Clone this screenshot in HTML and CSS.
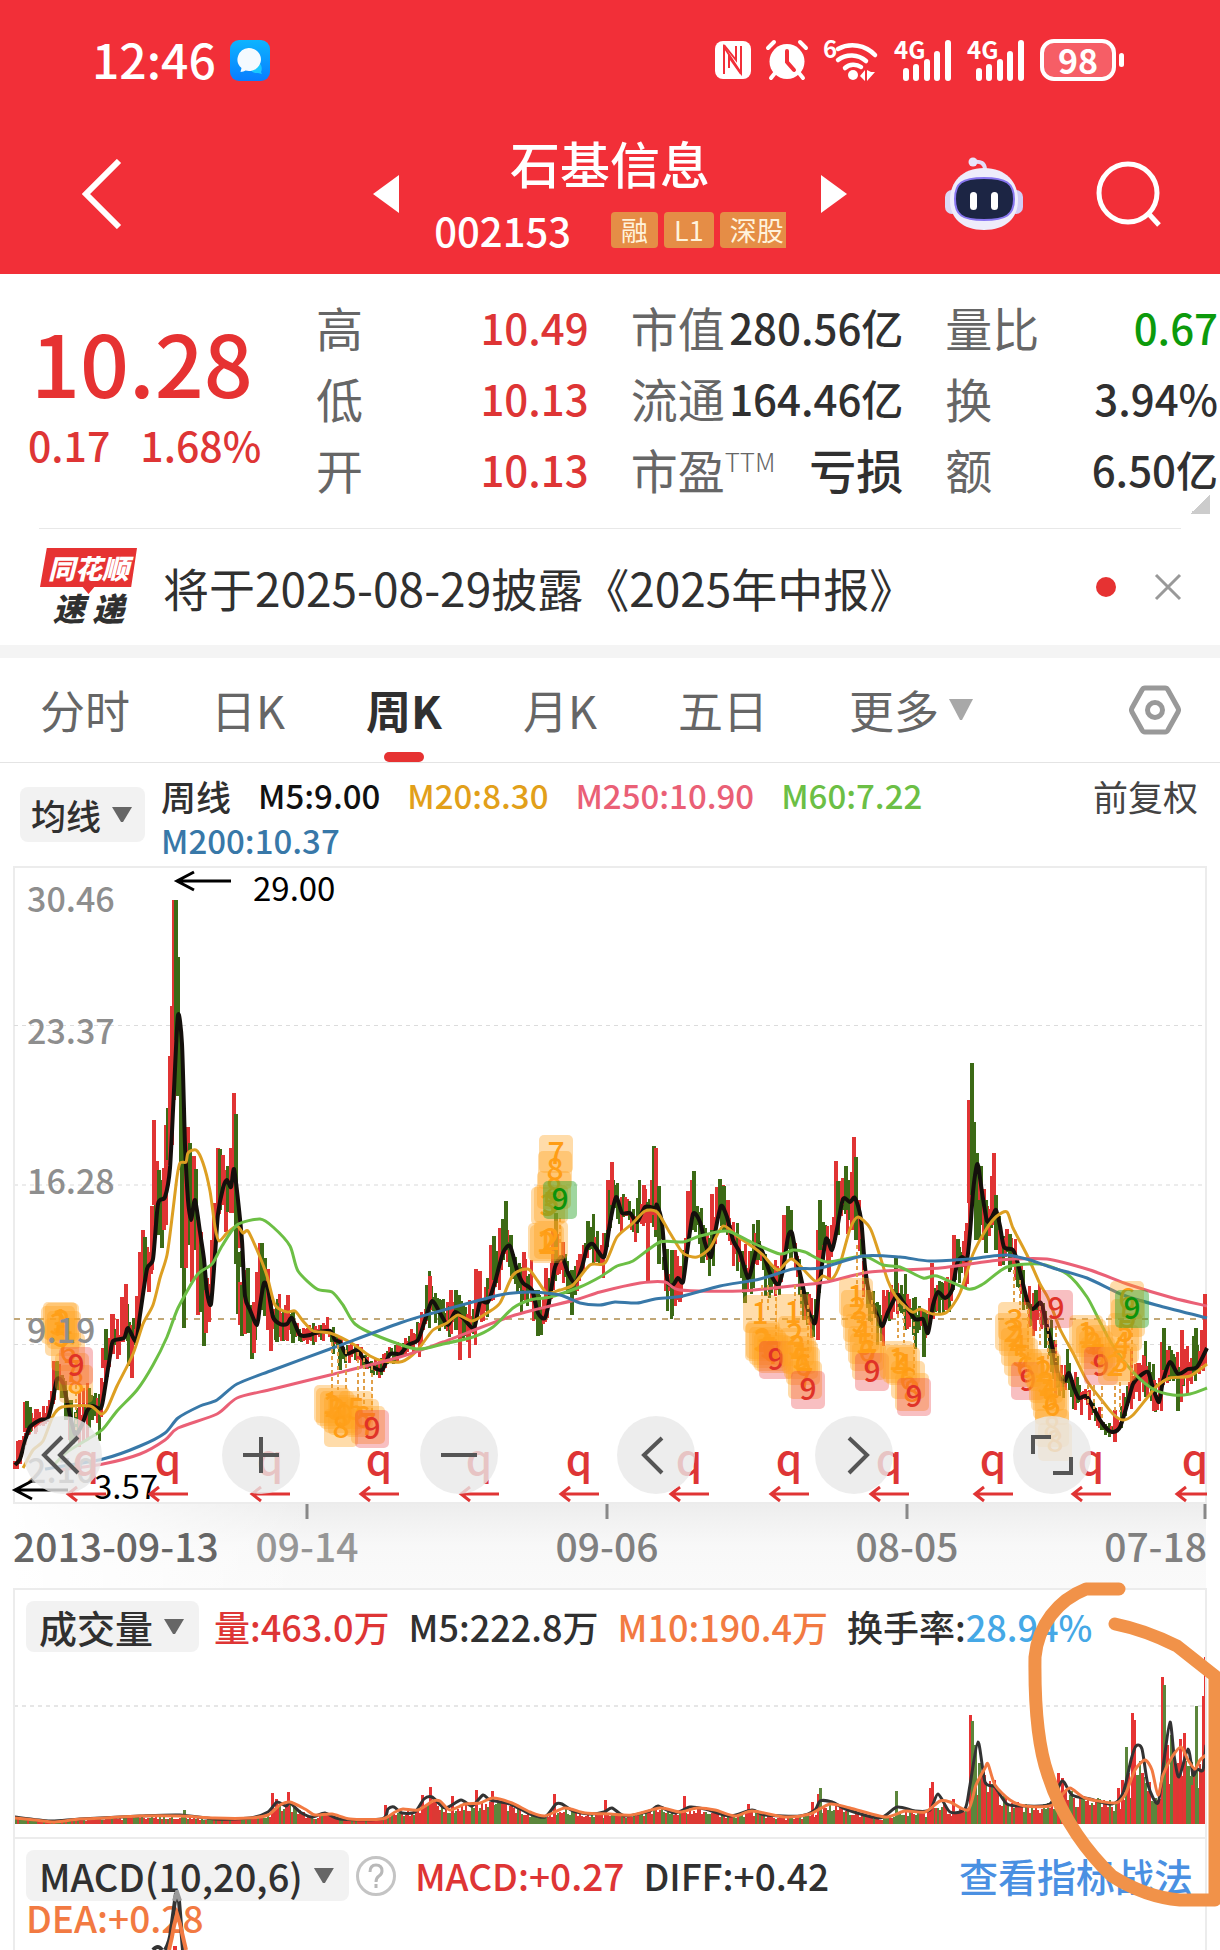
FILE: index.html
```html
<!DOCTYPE html>
<html lang="zh-CN">
<head>
<meta charset="utf-8">
<meta name="viewport" content="width=device-width, initial-scale=1">
<title>石基信息 002153</title>
<link rel="stylesheet" href="styles.css">
</head>
<body>
<header class="top">
  <div class="status">
    <div class="status-side">
      <span class="clock">12:46</span>
      <svg class="icon" width="40" height="41" viewBox="0 0 40 41">
        <defs><linearGradient id="chatBg" x1="0" y1="0" x2="0" y2="1"><stop offset="0" stop-color="#0db4ff"/><stop offset="1" stop-color="#087dff"/></linearGradient></defs>
        <rect width="40" height="41" rx="9" fill="url(#chatBg)"/>
        <path d="M26 21a8 8 0 0 1 5 11l1 2-4-1a8 8 0 0 1-8-4z" fill="#19c8ff"/>
        <path d="M18.500 8a12 11.500 0 1 1-3 22.500c-1 .5-3 1.500-5 1.500l1-4A12 11.500 0 0 1 18.500 8z" fill="#f4faff"/>
      </svg>
    </div>
    <div class="status-side status-right">
      <svg class="icon" width="36" height="38" viewBox="0 0 36 38">
        <rect width="36" height="38" rx="8" fill="#fff"/>
        <path d="M9 33V6l17 26V5" fill="none" stroke="#f22f38" stroke-width="2"/>
        <path d="M14 27V16l12 17M9 4l12 15V5" fill="none" stroke="#f22f38" stroke-width="2"/>
      </svg>
      <svg class="icon" width="42" height="40" viewBox="0 0 42 40">
        <circle cx="21" cy="21.500" r="17.500" fill="#fff"/>
        <path d="M2 8l6-6M40 8l-6-6M9 33l-4 5M33 33l4 5" stroke="#fff" stroke-width="4" stroke-linecap="round"/>
        <path d="M21 11v11l7 8" fill="none" stroke="#f22f38" stroke-width="4" stroke-linecap="round"/>
      </svg>
      <svg class="icon" width="56" height="42" viewBox="0 0 56 42">
        <text x="0" y="19" class="net-label">6</text>
        <path d="M15 10a31 31 0 0 1 37 6M15 21a22 22 0 0 1 28 1M22 29a13 13 0 0 1 16-1" fill="none" stroke="#fff" stroke-width="4.500" stroke-linecap="round"/>
        <circle cx="30" cy="36" r="5" fill="#fff"/>
        <path d="M37 37l5-6v11zM44 31v11l8-9h-4z" fill="#fff"/>
      </svg>
      <svg class="icon" width="58" height="42" viewBox="0 0 58 42">
        <text x="0" y="20" class="net-label">4G</text>
        <path d="M12 39v-7M22 39V28M33 39V23M43 39V15M54 39V4" stroke="#fff" stroke-width="6" stroke-linecap="round"/>
      </svg>
      <svg class="icon" width="58" height="42" viewBox="0 0 58 42">
        <text x="0" y="20" class="net-label">4G</text>
        <path d="M12 39v-7M22 39V28M33 39V23M43 39V15M54 39V4" stroke="#fff" stroke-width="6" stroke-linecap="round"/>
      </svg>
      <span class="battery">98</span>
    </div>
  </div>
  <div class="titlebar">
    <button class="plain back" aria-label="返回">
      <svg width="40" height="70" viewBox="0 0 40 70"><path d="M37 2L4 35l33 33" fill="none" stroke="#fff" stroke-width="6"/></svg>
    </button>
    <div class="switcher">
      <button class="plain" aria-label="上一只"><svg width="26" height="38" viewBox="0 0 26 38"><path d="M26 0v38L0 19z" fill="#fff"/></svg></button>
      <div class="stock">
        <h1>石基信息</h1>
        <p class="code-line"><span>002153</span><span class="tags"><span class="tag">融</span><span class="tag">L1</span><span class="tag tag-cut">深股</span></span></p>
      </div>
      <button class="plain" aria-label="下一只"><svg width="26" height="38" viewBox="0 0 26 38"><path d="M0 0v38l26-19z" fill="#fff"/></svg></button>
    </div>
    <div class="actions">
      <button class="plain" aria-label="智能助手">
        <svg width="78" height="74" viewBox="0 0 78 74">
          <path d="M28 5q12-2 12 8" fill="none" stroke="#e4dcf8" stroke-width="4"/>
          <circle cx="28" cy="5" r="4.500" fill="#e9e4fa"/>
          <rect x="0" y="33" width="14" height="24" rx="7" fill="#dcd8f5"/><rect x="64" y="33" width="14" height="24" rx="7" fill="#d2ccf5"/>
          <path d="M39 11c22 0 34 14 34 32S61 73 39 73 5 61 5 43s12-32 34-32z" fill="#eeecfb"/>
          <path d="M39 21c22 0 30 5 30 21s-8 21-30 21S10 58 10 42s7-21 29-21z" fill="#1c2544" stroke="#8876f0" stroke-width="2"/>
          <rect x="25" y="35" width="7" height="18" rx="3.500" fill="#fff"/><rect x="46" y="35" width="7" height="18" rx="3.500" fill="#fff"/>
        </svg>
      </button>
      <button class="plain" aria-label="搜索">
        <svg width="66" height="66" viewBox="0 0 66 66"><circle cx="32" cy="32" r="29" fill="none" stroke="#fff" stroke-width="5"/><path d="M52 52l11 12" stroke="#fff" stroke-width="5"/></svg>
      </button>
    </div>
  </div>
</header>

<main>
  <section class="quote">
    <div class="price-box">
      <div class="price">10.28</div>
      <div class="change"><span>0.17</span><span>1.68%</span></div>
    </div>
    <dl class="stats">
      <div><dt>高</dt><dd class="up">10.49</dd></div>
      <div><dt>低</dt><dd class="up">10.13</dd></div>
      <div><dt>开</dt><dd class="up">10.13</dd></div>
    </dl>
    <dl class="stats">
      <div><dt>市值</dt><dd>280.56亿</dd></div>
      <div><dt>流通</dt><dd>164.46亿</dd></div>
      <div><dt>市盈<sup>TTM</sup></dt><dd class="word">亏损</dd></div>
    </dl>
    <dl class="stats">
      <div><dt>量比</dt><dd class="down">0.67</dd></div>
      <div><dt>换</dt><dd>3.94%</dd></div>
      <div><dt>额</dt><dd>6.50亿</dd></div>
    </dl>
    <span class="corner"></span>
  </section>

  <section class="news">
    <div class="brand"><b class="brand-top">同花顺</b><b class="brand-bottom">速 递</b></div>
    <a class="headline" href="#report">将于2025-08-29披露《2025年中报》</a>
    <span class="dot"></span>
    <button class="plain" aria-label="关闭"><svg width="28" height="28" viewBox="0 0 28 28"><path d="M2 2l24 24M26 2L2 26" stroke="#999" stroke-width="3"/></svg></button>
  </section>

  <nav class="tabs">
    <button class="plain tab">分时</button>
    <button class="plain tab">日K</button>
    <button class="plain tab active">周K</button>
    <button class="plain tab">月K</button>
    <button class="plain tab">五日</button>
    <button class="plain tab more">更多<svg width="24" height="22" viewBox="0 0 24 22"><path d="M0 0h24L13 21h-2z" fill="#a8a8a8"/></svg></button>
    <button class="plain gear" aria-label="设置">
      <svg width="52" height="50" viewBox="0 0 52 50"><path d="M16 3h20q2 0 3 2l10 18q1 2 0 4L39 45q-1 2-3 2H16q-2 0-3-2L3 27q-1-2 0-4L13 5q1-2 3-2z" fill="none" stroke="#999" stroke-width="5"/><circle cx="26" cy="25" r="7.500" fill="none" stroke="#999" stroke-width="5"/></svg>
    </button>
  </nav>

  <section class="ma">
    <button class="picker">均线<span class="caret"></span></button>
    <ul class="legend">
      <li class="c-dark period">周线</li><li class="c-black">M5:9.00</li><li class="c-gold">M20:8.30</li><li class="c-pink">M250:10.90</li><li class="c-lime">M60:7.22</li><li class="c-blue">M200:10.37</li>
    </ul>
    <span class="adjust">前复权</span>
  </section>

  <section class="chart">
    <svg class="plot" viewBox="0 864 1220 724">
      <defs>
        <linearGradient id="stripY" x1="0" y1="0" x2="0" y2="1"><stop offset="0" stop-color="#ededed"/><stop offset=".5" stop-color="#f8f8f8"/><stop offset="1" stop-color="#fafafa"/></linearGradient>
        <linearGradient id="stripX"><stop offset="0" stop-color="#fff"/><stop offset="1" stop-color="#fff" stop-opacity="0"/></linearGradient>
      </defs>
      <rect x="13" y="1503" width="1193" height="85" fill="url(#stripY)"/>
      <rect x="13" y="1503" width="300" height="85" fill="url(#stripX)"/>
      <rect x="14" y="867" width="1192" height="636" fill="none" stroke="#ececec" stroke-width="2"/>
      <path d="M14 1025.500H1206M14 1344.500H1206" stroke="#dcdcdc" stroke-dasharray="4 4"/>
      <path d="M14 1185H1206" stroke="#ececec" stroke-width="2" stroke-dasharray="4 4"/>
      <path d="M14 1319H1206" stroke="#c2a878" stroke-width="2" stroke-dasharray="6 6"/>
      <g id="candles"></g>
      <g id="averages"></g>
      <g id="markers"></g>
      <g class="axis">
        <text x="27" y="912">30.46</text><text x="27" y="1044">23.37</text><text x="27" y="1194">16.28</text><text x="27" y="1343">9.19</text><text x="27" y="1483">2.10</text>
      </g>
      <g class="extreme">
        <text x="253" y="901">29.00</text><text x="94" y="1499">3.57</text>
        <path d="M231 881H178M194 872L177 881l17 9M68 1490H16M32 1481l-17 9 17 9"/>
      </g>
      <g id="signals"></g>
      <path d="M307 1504v15M607 1504v15M907 1504v15M1205 1504v15" stroke="#888" stroke-width="3"/>
      <g class="dates">
        <text x="13" y="1562" class="date-first">2013-09-13</text>
        <text x="307" y="1562" text-anchor="middle" class="date-faded">09-14</text>
        <text x="607" y="1562" text-anchor="middle">09-06</text>
        <text x="907" y="1562" text-anchor="middle">08-05</text>
        <text x="1207" y="1562" text-anchor="end">07-18</text>
      </g>
    </svg>
    <div class="controls">
      <button class="round" aria-label="快退"><svg viewBox="0 0 78 78"><path d="M38 21L20 39l18 18M54 21L36 39l18 18"/></svg></button>
      <button class="round" aria-label="放大"><svg viewBox="0 0 78 78"><path d="M39 21v36M21 39h36"/></svg></button>
      <button class="round" aria-label="缩小"><svg viewBox="0 0 78 78"><path d="M21 39h36"/></svg></button>
      <button class="round" aria-label="左移"><svg viewBox="0 0 78 78"><path d="M45 22L27 39l18 18"/></svg></button>
      <button class="round" aria-label="右移"><svg viewBox="0 0 78 78"><path d="M34 22l18 17-18 18"/></svg></button>
      <button class="round" aria-label="全屏"><svg viewBox="0 0 78 78"><path d="M20 38V21h18M58 41v16H40"/></svg></button>
    </div>
  </section>

  <section class="volume">
    <div class="panel">
      <div class="row">
        <button class="picker picker-wide">成交量<span class="caret"></span></button>
        <span class="up">量:463.0万</span><span class="c-dark">M5:222.8万</span><span class="c-orange">M10:190.4万</span><span class="c-dark">换手率:<span class="c-sky">28.94%</span></span>
      </div>
      <svg class="plot" viewBox="15 1652 1190 185">
        <path d="M14 1706H1206" stroke="#e6e6e6" stroke-width="2" stroke-dasharray="4 4"/>
        <g id="volume"></g>
      </svg>
    </div>
    <svg class="ink" width="200" height="350" viewBox="1020 1570 200 350">
      <path d="M1119 1589H1086C1058 1600 1038 1625 1035 1657Q1034 1735 1048 1775C1062 1820 1090 1855 1112 1876Q1145 1897 1180 1900H1215V1676L1177 1646Q1145 1630 1115 1624"/>
    </svg>
  </section>

  <section class="macd">
    <div class="panel">
      <div class="row row-macd">
        <button class="picker picker-wide">MACD(10,20,6)<span class="caret"></span></button>
        <svg class="help" width="40" height="40" viewBox="0 0 40 40"><circle cx="20" cy="20" r="18.500" fill="none" stroke="#c4c4c4" stroke-width="3"/><path d="M14 16q0-7 6-7t6 6q0 3-3 5t-3 6M20 28v4" fill="none" stroke="#b8b8b8" stroke-width="3"/></svg>
        <span class="up">MACD:+0.27</span><span class="c-dark">DIFF:+0.42</span>
        <a class="guide" href="#guide">查看指标战法</a>
      </div>
      <div class="dea">DEA:+0.28</div>
      <svg class="peak" width="60" height="60" viewBox="140 1890 60 60">
        <path d="M153 1950q5-6 9 0M165 1950q5-8 6-20l5-37 3 8 4 49" fill="none" stroke="#333" stroke-width="4"/>
        <path d="M174 1901l3-9 3 9" fill="none" stroke="#999" stroke-width="4"/>
        <path d="M169 1950q3-12 5-24l3-12 3 10 6 26" fill="none" stroke="#f27a42" stroke-width="4"/>
        <path d="M175 1946v4" stroke="#e63232" stroke-width="4"/>
      </svg>
    </div>
  </section>
</main>
<script src="script.js"></script>
</body>
</html>
```
FILE: styles.css
```css
* { box-sizing: border-box; }
body {
  margin: 0;
  background: #fff;
  color: #303030;
  font-family: "Noto Sans CJK SC", sans-serif;
  font-weight: 500;
  min-height: 100vh;
  display: flex;
  flex-direction: column;
  overflow-x: hidden;
}
main { flex: 1; display: flex; flex-direction: column; }
h1, p, dl, dd, ul { margin: 0; padding: 0; }
button { font: inherit; color: inherit; cursor: pointer; }
a { text-decoration: none; }
svg { display: block; }
.plain { border: 0; background: none; padding: 0; }

.up { color: #de3535; }
.down { color: #0c9a0c; }
.c-dark { color: #303030; }
.c-black { color: #111; }
.c-gold { color: #e2a01a; }
.c-pink { color: #ea6076; }
.c-lime { color: #6cbf45; }
.c-blue { color: #3878a8; }
.c-orange { color: #f27a42; }
.c-sky { color: #45a8e6; }

.top { background: #f22f38; color: #fff; }
.status { height: 120px; padding: 0 104px 0 92px; display: flex; justify-content: space-between; align-items: center; }
.status-side { display: flex; align-items: center; gap: 14px; }
.status-right { gap: 15px; }
.clock { font-size: 48px; line-height: 60px; padding-bottom: 4px; }
.icon { overflow: visible; }
.net-label { font-size: 24px; font-weight: 700; fill: #fff; }
.battery {
  position: relative;
  width: 76px; height: 42px;
  border: 4px solid #fff; border-radius: 14px;
  background: #f65e66;
  font-size: 34px; line-height: 34px; font-weight: 700; text-align: center;
}
.battery::after { content: ""; position: absolute; right: -12px; top: 10px; width: 5px; height: 14px; border-radius: 3px; background: #fff; }

.titlebar { display: grid; grid-template-columns: 1fr auto 1fr; align-items: center; padding: 0 58px 6px; height: 154px; }
.back { justify-self: start; margin-left: 24px; }
.switcher { display: flex; align-items: center; gap: 35px; }
.stock { padding-top: 6px; text-align: center; }
.stock h1 { font-size: 50px; line-height: 66px; font-weight: 500; }
.code-line { display: flex; align-items: center; justify-content: center; gap: 40px; font-size: 40px; line-height: 70px; }
.tags { display: flex; gap: 6px; }
.tag { background: #e58d46; color: #fff3dc; font-size: 27px; line-height: 36px; height: 36px; padding: 0 10px; border-radius: 4px; font-weight: 400; }
.tag-cut { padding-right: 2px; border-radius: 4px 0 0 4px; }
.actions { display: flex; align-items: center; justify-content: flex-end; gap: 73px; }

.quote { position: relative; display: flex; gap: 42px; padding: 17px 2px 25px 28px; }
.quote::after { content: ""; position: absolute; left: 39px; right: 39px; bottom: 0; border-bottom: 1px solid #e8e8e8; }
.price-box { width: 246px; color: #e63232; padding-top: 25px; white-space: nowrap; }
.price { font-size: 86px; line-height: 90px; padding-left: 3px; }
.change { display: flex; gap: 30px; font-size: 41px; line-height: 76px; color: #de3535; }
.stats { flex: 1; white-space: nowrap; }
.stats div { display: flex; justify-content: space-between; line-height: 71px; height: 71px; }
.stats dt { font-size: 47px; color: #666; font-weight: 400; }
.stats dd { font-size: 42px; }
.stats dd.word { font-size: 47px; }
.stats sup { font-size: 26px; line-height: 26px; font-weight: 300; }
.corner { position: absolute; right: 10px; bottom: 15px; width: 20px; height: 20px; background: linear-gradient(135deg, transparent 50%, #ccc 50%); }

.news { display: flex; align-items: center; height: 129px; padding: 0 38px 0 40px; border-bottom: 13px solid #f4f4f4; }
.brand { width: 97px; text-align: center; font-style: italic; font-weight: 900; }
.brand-top { display: block; height: 46px; background: #e63232; color: #fff; font-size: 27px; line-height: 39px; clip-path: polygon(7% 0, 100% 0, 94% 85%, 56% 85%, 50% 100%, 44% 85%, 0 85%); }
.brand-bottom { display: block; margin-top: -6px; font-size: 32px; line-height: 38px; }
.headline { flex: 1; margin-left: 26px; color: #303030; font-size: 46px; line-height: 60px; font-weight: 400; white-space: nowrap; }
.dot { width: 20px; height: 20px; border-radius: 50%; background: #e63232; margin-right: 38px; }

.tabs { display: flex; align-items: center; gap: 81px; height: 105px; padding: 0 39px 0 40px; border-bottom: 1px solid #e4e4e4; }
.tab { position: relative; height: 104px; font-size: 45px; line-height: 104px; font-weight: 400; color: #666; white-space: nowrap; }
.tab.active { font-weight: 700; color: #303030; }
.tab.active::after { content: ""; position: absolute; left: 50%; bottom: 0; width: 40px; height: 10px; margin-left: -20px; border-radius: 5px; background: #e63232; }
.more { display: flex; align-items: center; gap: 10px; }
.gear { margin-left: auto; }

.ma { display: flex; align-items: flex-start; padding: 10px 22px 0 20px; height: 101px; }
.picker { display: flex; align-items: center; gap: 11px; height: 55px; margin: 0; padding: 0 13px 0 11px; border: 0; border-radius: 8px; background: #f2f2f2; font-size: 35px; color: #303030; white-space: nowrap; }
.caret { width: 20px; height: 15px; background: #666; clip-path: polygon(0 0, 100% 0, 55% 100%, 45% 100%); }
.ma .picker { margin-top: 14px; }
.legend { flex: 1; display: flex; flex-wrap: wrap; column-gap: 27px; margin-left: 16px; list-style: none; font-size: 33px; line-height: 45px; }
.period { font-size: 35px; }
.adjust { font-size: 35px; line-height: 45px; color: #444; font-weight: 400; }

.chart { position: relative; }
.plot { width: 100%; height: auto; }
.plot text { font-family: "Noto Sans CJK SC", sans-serif; }
.axis { font-size: 34px; fill: #8e8e8e; }
.extreme { font-size: 33px; fill: #000; font-weight: 400; }
.extreme path { fill: none; stroke: #000; stroke-width: 3; }
.dates { font-size: 39px; fill: #808080; }
.date-first { fill: #666; }
.date-faded { fill: #969696; }
.marker { font-size: 30px; text-anchor: middle; }
.signal { font-size: 42px; text-anchor: middle; fill: #de3535; }
.controls { position: absolute; left: 24px; right: 129px; bottom: 94px; display: flex; justify-content: space-between; }
.round { width: 78px; height: 78px; padding: 0; border: 0; border-radius: 50%; background: rgba(232, 232, 232, .8); }
.round path { fill: none; stroke: #555; stroke-width: 4; }

.volume { position: relative; z-index: 1; }
.panel { position: relative; margin: 0 13px; border: 2px solid #ececec; border-bottom: 0; }
.row { display: flex; align-items: center; gap: 19px; padding: 11px 0 0 11px; font-size: 36px; line-height: 51px; white-space: nowrap; }
.picker-wide { height: 51px; padding: 0 15px 0 13px; font-size: 38px; margin-right: -4px; }
.ink { position: absolute; right: 0; top: -18px; pointer-events: none; }
.ink path { fill: none; stroke: #f19249; stroke-width: 13; stroke-linecap: round; stroke-linejoin: round; }

.macd { flex: 1; display: flex; }
.macd .panel { flex: 1; min-height: 112px; overflow: hidden; }
.row-macd { font-size: 37px; padding-right: 12px; }
.row-macd .picker { margin-right: -12px; }
.guide { margin-left: auto; color: #4a90e2; font-size: 39px; }
.dea { padding-left: 11px; color: #f27a42; font-size: 37px; line-height: 32px; }
.peak { position: absolute; left: 125px; top: 51px; }
```
FILE: script.js
```js
const NS = "http://www.w3.org/2000/svg";
const RED = "#e03434";
const GREEN = "#3c6a16";

function add(parent, name, attrs, text) {
  const el = document.createElementNS(NS, name);
  for (const key in attrs) el.setAttribute(key, attrs[key]);
  if (text !== undefined) el.textContent = text;
  parent.appendChild(el);
  return el;
}

function points(str) {
  return str.trim().split(/\s+/).map(p => p.split(",").map(Number));
}

function valueAt(list, x) {
  if (x <= list[0][0]) return list[0][1];
  for (let i = 1; i < list.length; i++) {
    if (x <= list[i][0]) {
      const [x0, y0] = list[i - 1], [x1, y1] = list[i];
      return y0 + (y1 - y0) * (x - x0) / (x1 - x0);
    }
  }
  return list[list.length - 1][1];
}

/* Catmull-Rom smoothing with a low tension, so peaks stay sharp */
function smooth(list) {
  let d = "M" + list[0].join(" ");
  for (let i = 0; i < list.length - 1; i++) {
    const p0 = list[i - 1] || list[i], p1 = list[i], p2 = list[i + 1], p3 = list[i + 2] || p2;
    const c = [p1[0] + (p2[0] - p0[0]) / 8, p1[1] + (p2[1] - p0[1]) / 8, p2[0] - (p3[0] - p1[0]) / 8, p2[1] - (p3[1] - p1[1]) / 8];
    d += "C" + c.map(v => v.toFixed(1)).join(" ") + " " + p2.join(" ");
  }
  return d;
}

let seed = 7;
function rnd() { seed = (seed * 16807) % 2147483647; return seed / 2147483647; }

const m5 = points(`15,1465 20,1459 25,1441 30,1427 40,1420 48,1418 53,1399 57,1379 63,1383 68,1406 75,1434 82,1425 87,1411 92,1406 101,1408 105,1388 110,1356 113,1341 124,1338 128,1328 136,1341 140,1315 147,1269 153,1259 158,1204 165,1197 170,1168 174,1090 178,1015 182,1044 185,1145 188,1200 191,1220 195,1200 200,1232 204,1259 207,1292 211,1304 215,1255 218,1214 223,1188 227,1180 231,1187 234,1169 238,1200 242,1241 245,1296 250,1310 257,1325 260,1305 264,1283 268,1289 273,1317 280,1324 287,1324 292,1318 300,1335 310,1335 315,1333 330,1331 335,1340 340,1342 346,1354 357,1350 363,1358 370,1365 382,1370 390,1354 400,1354 408,1345 418,1340 425,1320 432,1301 440,1313 448,1325 455,1312 463,1318 474,1328 480,1302 488,1302 495,1282 503,1253 510,1246 517,1270 523,1283 532,1290 538,1313 545,1318 550,1297 555,1267 562,1257 568,1273 575,1283 582,1267 587,1248 593,1244 604,1257 610,1223 616,1197 622,1213 630,1213 637,1222 645,1207 655,1208 657,1205 662,1223 665,1260 668,1283 673,1285 678,1278 683,1282 687,1253 693,1214 700,1222 705,1243 711,1257 715,1233 721,1206 727,1217 733,1240 740,1253 748,1278 753,1263 758,1245 763,1253 770,1273 778,1285 783,1270 788,1237 792,1233 797,1260 803,1287 807,1307 815,1323 820,1281 826,1239 832,1250 837,1229 843,1199 850,1202 855,1198 861,1219 865,1267 870,1298 875,1310 882,1326 888,1312 897,1295 903,1302 915,1319 923,1319 928,1333 933,1305 938,1292 945,1298 952,1290 957,1264 962,1257 967,1259 970,1233 973,1192 976,1169 978,1165 982,1192 987,1221 992,1217 996,1210 1000,1226 1004,1247 1013,1250 1018,1264 1023,1284 1028,1303 1033,1309 1041,1303 1047,1326 1053,1350 1058,1374 1064,1382 1069,1373 1074,1388 1079,1398 1086,1396 1093,1407 1100,1420 1107,1429 1113,1432 1120,1427 1127,1405 1133,1384 1140,1376 1148,1372 1153,1388 1159,1402 1163,1381 1170,1362 1178,1374 1188,1369 1197,1367 1207,1348`);
const m20 = points(`23,1468 33,1450 43,1441 53,1416 62,1407 90,1406 101,1414 107,1409 117,1386 133,1354 143,1324 153,1305 160,1278 167,1255 172,1218 177,1177 180,1163 186,1162 188,1153 196,1150 203,1163 210,1191 215,1227 219,1241 227,1233 237,1226 243,1233 248,1231 257,1250 267,1276 275,1305 287,1312 295,1311 303,1321 313,1331 330,1333 353,1344 370,1356 383,1361 400,1362 410,1357 420,1347 433,1330 447,1323 458,1315 472,1321 487,1313 500,1303 513,1275 528,1269 537,1280 547,1293 560,1290 573,1285 590,1265 605,1263 617,1237 633,1223 645,1211 657,1212 670,1233 683,1253 697,1257 710,1248 723,1226 737,1236 753,1247 763,1255 778,1270 792,1259 815,1281 823,1276 832,1279 840,1264 850,1229 858,1217 870,1228 878,1250 888,1281 897,1298 912,1312 920,1309 933,1314 947,1312 960,1293 973,1254 987,1228 997,1216 1007,1212 1013,1228 1027,1255 1040,1284 1048,1298 1060,1329 1073,1353 1087,1381 1100,1398 1113,1414 1123,1420 1133,1415 1147,1398 1157,1386 1170,1378 1190,1376 1207,1364`);
const m60 = points(`55,1464 67,1452 93,1436 103,1429 117,1411 137,1390 153,1365 167,1337 178,1308 197,1275 212,1264 222,1246 237,1225 260,1219 273,1227 290,1246 298,1271 317,1289 332,1292 343,1305 355,1324 380,1337 417,1349 443,1344 473,1337 493,1327 513,1308 530,1300 550,1297 580,1287 600,1277 617,1266 633,1261 660,1242 683,1242 700,1236 727,1231 753,1243 780,1254 793,1250 805,1252 827,1262 863,1256 883,1265 900,1267 923,1278 937,1276 968,1289 983,1284 1007,1267 1040,1264 1067,1274 1087,1297 1100,1322 1113,1346 1133,1372 1153,1389 1173,1395 1190,1394 1207,1388`);
const m200 = points(`45,1469 103,1459 140,1446 165,1433 178,1418 200,1406 217,1400 237,1384 273,1370 330,1349 400,1323 433,1313 500,1295 530,1292 560,1295 580,1303 600,1305 615,1302 637,1303 655,1299 683,1296 720,1286 760,1279 793,1269 820,1268 863,1256 900,1257 930,1261 970,1259 985,1257 1007,1255 1030,1260 1053,1268 1087,1278 1123,1295 1160,1306 1207,1318`);
const m250 = points(`60,1470 103,1464 140,1454 165,1440 178,1428 217,1414 237,1398 273,1389 330,1375 400,1357 443,1342 515,1315 575,1300 600,1292 640,1283 665,1282 680,1290 740,1291 800,1285 827,1282 870,1272 940,1268 1000,1260 1047,1259 1090,1270 1130,1285 1173,1298 1207,1306`);

/* x, high, low, colour */
const bars = `15,1461,1469,r 20,1440,1464,r 25,1402,1432,r 27,1401,1428,g 30,1407,1432,g 36,1409,1432,r 54,1361,1400,r 57,1362,1390,g 62,1375,1398,g 66,1390,1420,g 71,1400,1445,g 92,1398,1420,g 103,1348,1368,r 106,1329,1360,g 112,1314,1345,r 122,1297,1340,r 126,1284,1330,r 129,1330,1366,g 132,1335,1378,r 137,1296,1340,r 140,1252,1300,r 143,1230,1290,r 145,1237,1280,g 149,1260,1292,r 152,1206,1270,r 154,1120,1205,r 157,1161,1215,r 159,1170,1235,g 162,1180,1248,g 164,1168,1230,r 166,1125,1225,r 168,1108,1160,g 170,1056,1165,r 172,1006,1145,r 174,900,1100,r 176,900,1040,g 178,957,1096,g 181,1040,1170,g 182,1150,1268,g 184,1108,1328,g 186,1160,1268,r 188,1127,1210,r 190,1143,1245,g 192,1210,1282,r 194,1156,1245,r 196,1169,1250,g 198,1220,1315,r 201,1240,1312,g 204,1270,1346,g 206,1290,1333,r 209,1284,1322,r 212,1240,1290,r 214,1203,1270,r 218,1148,1215,r 220,1149,1210,g 223,1155,1205,r 226,1170,1232,r 228,1166,1212,g 231,1148,1213,r 234,1093,1213,r 236,1114,1264,g 238,1252,1314,g 240,1282,1325,r 242,1285,1336,g 245,1270,1334,r 248,1268,1333,g 252,1310,1359,g 254,1302,1353,r 257,1272,1320,r 260,1243,1300,r 262,1243,1310,g 265,1258,1316,g 268,1269,1330,r 271,1300,1351,r 277,1303,1342,g 288,1295,1330,r 293,1310,1343,g 340,1340,1370,g 427,1285,1320,g 430,1276,1310,r 451,1290,1330,r 456,1290,1330,g 460,1315,1360,r 476,1269,1320,r 480,1271,1310,r 491,1245,1290,r 494,1236,1280,g 500,1228,1265,r 503,1219,1260,g 506,1201,1250,g 511,1235,1265,g 524,1252,1290,r 538,1290,1336,g 546,1268,1300,r 553,1230,1290,r 556,1213,1265,g 563,1242,1270,r 572,1270,1315,g 588,1221,1250,g 608,1180,1230,r 610,1190,1228,g 612,1162,1205,r 644,1185,1215,r 648,1210,1281,r 652,1180,1215,r 654,1146,1210,g 656,1148,1230,r 659,1186,1264,g 672,1250,1316,g 677,1259,1300,r 680,1270,1302,r 688,1191,1240,r 692,1180,1230,r 694,1171,1230,g 700,1212,1240,g 712,1194,1230,r 717,1187,1220,r 720,1179,1215,g 724,1186,1230,g 728,1200,1230,r 745,1265,1303,g 758,1220,1260,g 784,1215,1250,r 788,1206,1245,g 791,1210,1260,g 818,1230,1340,r 820,1200,1250,g 823,1222,1245,g 829,1240,1280,r 836,1161,1230,r 838,1181,1235,g 843,1178,1205,r 846,1166,1210,g 852,1172,1230,r 854,1137,1200,r 856,1157,1240,g 896,1258,1300,g 924,1310,1357,g 932,1263,1310,r 954,1235,1280,r 958,1239,1270,g 967,1223,1284,r 969,1100,1203,r 972,1063,1195,g 974,1122,1200,g 976,1160,1240,g 979,1200,1240,g 984,1189,1240,r 986,1200,1253,g 992,1176,1225,r 994,1153,1225,r 996,1195,1250,g 1000,1230,1266,r 1007,1229,1250,r 1010,1234,1270,g 1036,1290,1310,g 1115,1410,1442,r 1144,1356,1385,r 1154,1380,1411,r 1162,1342,1380,r 1164,1328,1370,g 1168,1350,1375,r 1178,1370,1411,g 1182,1330,1385,r 1196,1328,1370,g 1202,1330,1360,r 1205,1294,1355,r`;

const candles = document.getElementById("candles");
for (let x = 16; x < 1206; x += 2) {
  const mid = valueAt(m5, x + 3);
  const rising = valueAt(m5, x + 7) < valueAt(m5, x);
  let k = 1;
  if (x > 286 && x < 410) k = 0.45;
  if (x > 168 && x < 186) k = 0.2;
  if (x > 1080 && x < 1122) k = 0.5;
  if (x < 52) k = 0.6;
  const wild = rnd() < 0.22 ? 1.6 : 1;
  const top = mid - k * wild * (3 + rnd() * 19);
  const low = mid + k * wild * (3 + rnd() * 18);
  const red = rnd() < (rising ? 0.72 : 0.34);
  add(candles, "rect", { x, y: Math.round(top), width: 3, height: Math.max(3, Math.round(low - top)), fill: red ? RED : GREEN });
}
bars.split(" ").forEach(b => {
  const [x, y, low, c] = b.split(",");
  add(candles, "rect", { x: x - 2, y, width: 4, height: low - y, fill: c === "r" ? RED : GREEN });
});

const averages = document.getElementById("averages");
[[m5, "#14100c", 4], [m20, "#dd9f22", 3], [m250, "#ea6076", 3], [m60, "#6cbf45", 3], [m200, "#3878a8", 3]].forEach(([list, stroke, w]) =>
  add(averages, "path", { d: smooth(list), fill: "none", stroke, "stroke-width": w, "stroke-linejoin": "round" }));

/* digit, x, y, kind */
const marks = `1,60,1321,o 2,62,1322,o 3,58,1325,o 4,64,1330,o 5,62,1337,o 6,68,1352,o 7,72,1372,o 8,76,1384,o 9,76,1366,r
1,331,1404,o 2,333,1407,o 3,337,1410,o 4,341,1414,o 9,345,1416,o 8,341,1428,o 5,356,1410,o 6,362,1418,o 7,368,1425,o 9,372,1429,r
1,545,1242,o 2,547,1244,o 2,551,1240,o 3,548,1206,o 5,551,1204,o 8,554,1190,o 8,555,1170,o 7,556,1154,o 9,560,1200,g
1,760,1314,o 2,763,1340,o 3,762,1342,o 4,766,1346,o 5,769,1349,o 6,771,1352,o 7,774,1354,o 9,776,1360,r
1,793,1313,o 2,795,1335,o 3,797,1347,o 4,799,1355,o 5,801,1360,o 6,803,1366,o 7,805,1380,o 9,808,1390,r
1,856,1297,o 2,858,1309,o 3,860,1323,o 4,862,1333,o 5,865,1345,o 6,867,1352,o 7,869,1361,o 9,872,1372,r
1,897,1360,o 3,900,1364,o 4,903,1366,o 6,908,1380,o 8,912,1392,o 9,914,1397,r
2,1012,1332,o 3,1015,1321,o 2,1016,1337,o 4,1018,1347,o 5,1021,1357,o 6,1025,1368,o 9,1028,1381,r
1,1042,1368,o 2,1044,1372,o 3,1046,1384,o 4,1048,1392,o 5,1050,1400,o 6,1052,1406,o 8,1052,1428,o 8,1055,1442,o 9,1056,1309,r
1,1086,1334,o 2,1089,1338,o 3,1093,1344,o 4,1096,1350,o 5,1098,1356,o 9,1101,1366,r
2,1115,1366,o 3,1120,1362,o 4,1122,1344,o 5,1125,1332,o 5,1128,1318,o 6,1127,1300,o 9,1132,1309,g`;
const markers = document.getElementById("markers");
add(markers, "path", { d: "M76 1385V1430M332 1342v50M338 1345v45M346 1350v40M358 1352v46M364 1358v46M372 1366v45M560 1218v28M762 1285v20M768 1285v26M776 1290v52M795 1285v16M801 1290v28M808 1305v66M857 1245v40M863 1270v30M872 1300v50M898 1300v38M904 1305v38M914 1322v56M1014 1270v32M1020 1280v30M1028 1310v50M1040 1306v42M1048 1320v40M1056 1326v36M1088 1385v18M1094 1385v24M1102 1386v35M1115 1386v30M1120 1382v30M1132 1326v50", stroke: "#e0a04a", "stroke-width": 2, "stroke-dasharray": "4 3" });
marks.split(/\s+/).forEach(m => {
  const [digit, x, y, kind] = m.split(",");
  const box = { o: ["#ffa31f", 0.38, "#ff9d14"], r: ["#e8383e", 0.32, "#e03228"], g: ["#2aa52a", 0.45, "#0b930b"] }[kind];
  add(markers, "rect", { x: x - 17, y: y - 19, width: 34, height: 38, rx: 5, fill: box[0], "fill-opacity": box[1] });
  add(markers, "text", { x, y: +y + 10, fill: box[2], class: "marker" }, digit);
});

const signals = document.getElementById("signals");
[86, 168, 270, 379, 479, 579, 689, 789, 889, 993, 1091, 1195].forEach(x => {
  add(signals, "text", { x, y: 1475, class: "signal" }, "q");
  const end = Math.min(x + 20, 1207);
  add(signals, "path", { d: `M${end} 1494H${x - 18}M${x - 9} 1487l-9 7 9 7`, fill: "none", stroke: RED, "stroke-width": 3 });
});

const v5 = points(`14,1817 50,1821 80,1819 140,1816 180,1815 215,1819 250,1818 268,1812 277,1802 286,1806 290,1803 300,1812 312,1817 325,1813 340,1819 382,1819 388,1809 394,1807 402,1813 415,1812 424,1799 432,1797 445,1808 461,1800 472,1806 483,1795 490,1800 510,1804 530,1814 545,1817 556,1804 562,1804 573,1811 590,1814 604,1812 612,1808 625,1816 650,1811 658,1806 675,1813 690,1807 705,1809 730,1816 752,1810 765,1815 800,1816 815,1810 820,1801 832,1802 848,1810 880,1818 897,1807 915,1811 930,1810 938,1794 950,1812 965,1809 970,1785 978,1742 985,1782 995,1787 1007,1804 1025,1806 1050,1804 1062,1781 1072,1795 1090,1799 1112,1804 1123,1793 1131,1760 1136,1746 1142,1749 1148,1785 1158,1803 1164,1760 1170,1722 1174,1755 1179,1777 1188,1749 1193,1775 1197,1769 1203,1770 1206,1745`);
const v10 = points(`14,1818 35,1820 55,1822 80,1819 105,1818 140,1816 180,1816 215,1818 250,1818 268,1815 280,1805 290,1802 305,1809 315,1815 332,1814 350,1819 382,1819 395,1812 403,1809 418,1810 433,1801 440,1801 450,1810 465,1804 480,1803 493,1798 512,1803 530,1812 545,1816 565,1808 585,1813 610,1814 632,1815 660,1808 680,1812 697,1808 715,1810 735,1816 752,1811 785,1817 810,1814 830,1804 850,1808 885,1817 905,1811 925,1812 940,1801 950,1802 968,1810 976,1785 985,1768 988,1764 995,1785 1010,1800 1025,1806 1050,1806 1060,1797 1070,1788 1085,1798 1115,1803 1125,1795 1135,1770 1145,1760 1152,1770 1158,1795 1163,1775 1172,1757 1181,1747 1188,1760 1195,1769 1200,1760 1206,1755`);
const volume = document.getElementById("volume");
for (let x = 15; x < 1206; x += 2) {
  const base = Math.max(valueAt(v5, x), valueAt(v10, x));
  const h = Math.max(3, (1824 - base) * (0.6 + rnd() * 0.55));
  add(volume, "rect", { x, y: Math.round(1824 - h), width: 2, height: Math.round(h), fill: rnd() < 0.58 ? "#dc3934" : "#5c863c" });
}
"272,1793,r 288,1792,r 276,1799,r 184,1810,g 385,1805,r 422,1795,r 430,1787,r 452,1796,r 476,1790,r 492,1791,r 554,1794,r 605,1800,r 684,1796,r 748,1804,r 812,1802,r 818,1794,r 820,1788,g 896,1791,g 930,1788,r 932,1782,r 953,1799,r 970,1715,r 972,1721,g 975,1745,g 979,1763,g 984,1775,r 988,1792,r 994,1780,r 1058,1773,r 1062,1778,r 1118,1788,r 1122,1780,r 1126,1747,g 1128,1773,r 1132,1713,r 1134,1720,r 1137,1775,g 1142,1773,r 1145,1784,g 1162,1677,r 1164,1685,g 1167,1745,r 1171,1735,g 1174,1760,r 1180,1739,r 1184,1733,r 1188,1766,g 1192,1785,r 1196,1706,g 1200,1783,r 1203,1696,r 1205,1657,r".split(" ").forEach(b => {
  const [x, y, c] = b.split(",");
  add(volume, "rect", { x: x - 1, y, width: 3, height: 1824 - y, fill: c === "r" ? "#e63434" : "#5c863c" });
});
add(volume, "path", { d: smooth(v5), fill: "none", stroke: "#333", "stroke-width": 3 });
add(volume, "path", { d: smooth(v10), fill: "none", stroke: "#f27a42", "stroke-width": 3 });
```
